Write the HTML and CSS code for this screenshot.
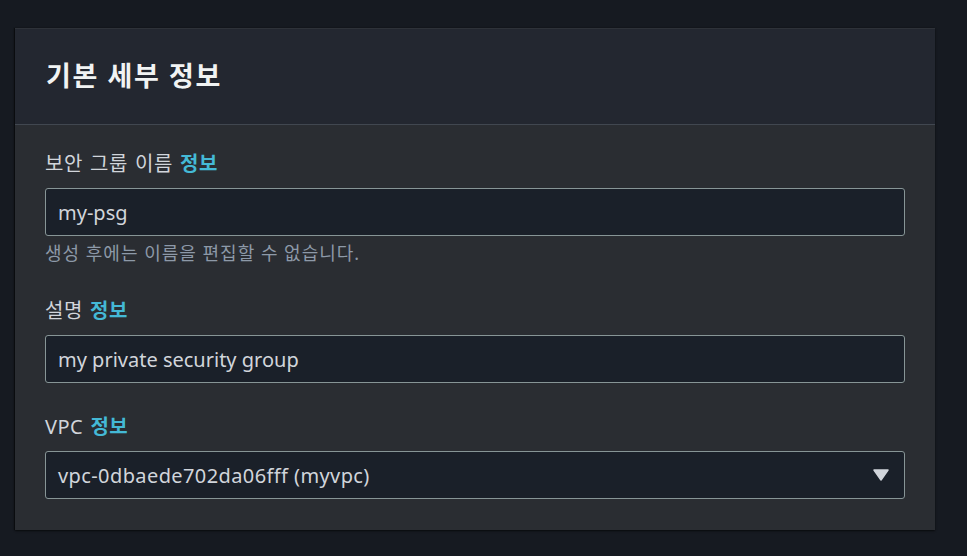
FILE: index.html
```html
<!DOCTYPE html>
<html lang="ko">
<head>
<meta charset="utf-8">
<link rel="stylesheet" href="styles.css">
</head>
<body>
<div class="page">
  <section class="card">
    <header class="card-header">
      <h2 class="title">기본 세부 정보</h2>
    </header>
    <div class="card-body">
      <div class="field">
        <label class="label">보안 그룹 이름 <a class="info">정보</a></label>
        <div class="input">my-psg</div>
        <div class="hint">생성 후에는 이름을 편집할 수 없습니다.</div>
      </div>
      <div class="field">
        <label class="label">설명 <a class="info">정보</a></label>
        <div class="input">my private security group</div>
      </div>
      <div class="field">
        <label class="label">VPC <a class="info">정보</a></label>
        <div class="input select">
          <span class="value">vpc-0dbaede702da06fff (myvpc)</span>
          <svg class="caret" width="16" height="12" viewBox="0 0 16 12"><path d="M1 1 H15 L8 11 Z" fill="#d1d5db" stroke="#d1d5db" stroke-width="1.5" stroke-linejoin="round"/></svg>
        </div>
      </div>
    </div>
  </section>
</div>
</body>
</html>
```

FILE: styles.css
```css
* { box-sizing: border-box; }
html, body { margin: 0; padding: 0; }
body {
  background: #161a21;
  font-family: "Noto Sans", "Noto Sans CJK KR", sans-serif;
  color: #d1d5db;
  width: 967px;
  height: 556px;
  overflow: hidden;
}
.page {
  padding: 28px 32px 0 15px;
}
.card {
  background: #2a2d32;
  box-shadow: 0 1px 2px rgba(0,0,0,0.6), -1px 0 1px rgba(0,0,0,0.4);
  border-top: 1px solid #2e3239;
}
.card-header {
  background: #232730;
  height: 96px;
  border-bottom: 1px solid #414750;
  display: flex;
  align-items: center;
  padding: 0 31px 5px 31px;
}
.title {
  margin: 0;
  font-size: 27px;
  font-weight: 700;
  color: #f1f3f3;
  letter-spacing: 1.6px;
}
.card-body {
  padding: 25px 30px 31px 30px;
  display: flex;
  flex-direction: column;
  gap: 30px;
}
.field { display: flex; flex-direction: column; }
.label {
  font-size: 20px;
  line-height: 28px;
  margin-bottom: 10px;
  color: #d1d5db;
  letter-spacing: 0.5px;
  word-spacing: 1.5px;
}
.info {
  color: #44b9d6;
  font-weight: 700;
}
.input {
  height: 48px;
  border: 1px solid #879596;
  border-radius: 3px;
  background: #1a2029;
  padding: 0 12px;
  display: flex;
  align-items: center;
  font-size: 20px;
  color: #d1d5db;
}
.select { justify-content: space-between; padding-right: 15px; }
.value { letter-spacing: 0.4px; }
.caret { display: block; }
.hint {
  font-size: 18px;
  line-height: 28px;
  color: #8d99a8;
  margin-top: 3px;
  letter-spacing: 1px;
}
```
